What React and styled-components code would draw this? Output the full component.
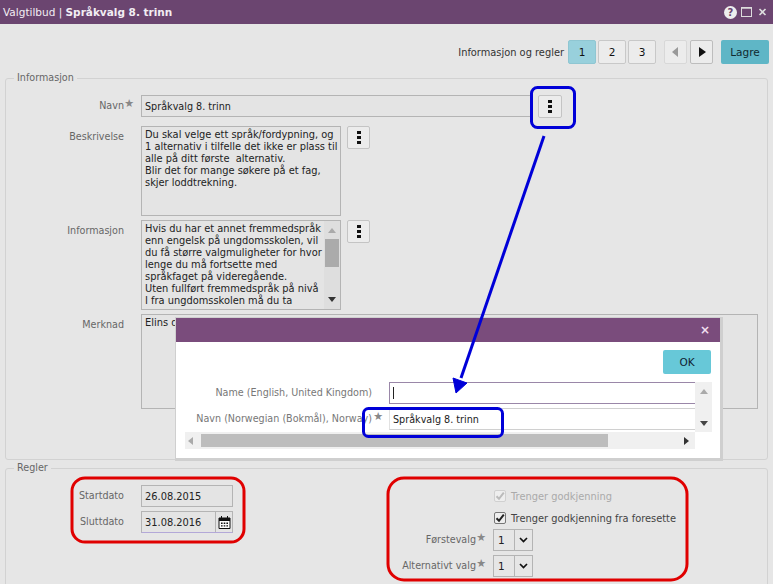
import React from "react";
import styled, { createGlobalStyle } from "styled-components";

const Global = createGlobalStyle`
  html, body { margin: 0; padding: 0; background: #e6e6e6; }
  * { box-sizing: border-box; }
`;
const font = `"DejaVu Sans", Verdana, sans-serif`;

const Page = styled.div`
  position: relative; width: 773px; height: 584px; overflow: hidden;
  background: #e6e6e6; font-family: ${font}; font-size: 9.85px; color: #222;
`;
const TitleBar = styled.header`
  height: 24px; background: #6b4570; color: #f2edf3; display: flex; align-items: center;
  justify-content: space-between; padding: 0 4px 0 3px; font-size: 10.5px;
`;
const TitleStrong = styled.b`font-weight: 700;`;
const WinIcons = styled.div`display: flex; align-items: center; gap: 4px;`;
const Toolbar = styled.div`
  height: 48px; padding: 8px 4px 0 0; display: flex; align-items: center; justify-content: flex-end; color: #333;
`;
const StepLabel = styled.span`margin-right: 4px;`;
const Step = styled.button`
  width: 28px; height: 24px; margin-right: 2px; font: 400 10.5px ${font}; color: #111; padding: 0;
  border: 1px solid ${p => (p.$on ? "#8fc6d2" : "#c8c8c8")}; border-radius: 2px;
  background: ${p => (p.$on ? "#98d0dc" : "#ececec")};
`;
const Nav = styled.button`
  width: 23px; height: 24px; padding: 0; display: flex; align-items: center; justify-content: center;
  border: 1px solid ${p => (p.$off ? "#d8d8d8" : "#bdbdbd")}; border-radius: 2px; background: #ececec;
  margin-left: ${p => p.$gap || 0}px;
`;
const Save = styled.button`
  width: 48px; height: 24px; margin-left: 8px; border: 0; border-radius: 2px; background: #5fb6c6;
  font: 10.5px ${font}; color: #102b30; padding: 0;
`;
const Group = styled.fieldset`
  margin: 0 5px 2px; padding: 0; border: 1px solid #d2d2d2; border-radius: 3px; height: ${p => p.$h}px; min-width: 0;
`;
const Legend = styled.legend`margin-left: 8px; padding: 0 3px; color: #666; font-size: 9.6px; line-height: 12px;`;
const Form = styled.div`padding: 11px 0 0 0; display: flex; flex-direction: column; gap: 4px;`;
const Row = styled.div`display: flex; align-items: flex-start; gap: 6px; margin-bottom: ${p => p.$mb || 0}px;`;
const Label = styled.label`
  width: 129px; padding-right: 11px; text-align: right; color: #666; font-size: 9.6px; line-height: 22px; position: relative; flex: none;
`;
const Star = styled.span`position: absolute; right: ${p => p.$r}px; top: -2px; color: #888; font-size: 11px;`;
const Field = styled.div`
  width: ${p => p.$w}px; height: 22px; border: 1px solid #b4b4b4; background: #e4e4e4; padding: 0 3px;
  line-height: 21px; color: #222; flex: none; display: flex; align-items: center; font-size: ${p => p.$fs || 9.65}px;
`;
const Area = styled.div`
  position: relative; width: ${p => p.$w}px; height: ${p => p.$h}px; border: 1px solid #b4b4b4; background: #e4e4e4;
  padding: 2px 3px; line-height: 12px; color: #222; overflow: hidden; white-space: pre; flex: none;
`;
const Dots = styled.button`
  width: ${p => p.$w || 23}px; height: 23px; border: 1px solid #c4c4c4; border-radius: 2px; background: #ececec; padding: 0;
  display: flex; flex-direction: column; align-items: center; justify-content: center; gap: 2px; flex: none;
`;
const Dot = styled.i`display: block; width: 4px; height: 3px; background: #111;`;
const ScrollTrack = styled.div`
  position: absolute; right: 0; top: 0; bottom: 0; width: 16px; background: #dedede;
  display: flex; flex-direction: column; align-items: center; justify-content: space-between; padding: 6px 0;
`;
const Thumb = styled.div`position: absolute; left: 1px; top: 18px; width: 14px; height: 28px; background: #ababab;`;
const Split = styled.div`display: flex; padding-top: 11px;`;
const LeftCol = styled.div`display: flex; flex-direction: column; gap: 4px;`;
const RightCol = styled.div`display: flex; flex-direction: column; margin-left: 150px;`;
const CheckRow = styled.div`
  height: 22px; margin-left: 110px; display: flex; align-items: center; gap: 5px; color: ${p => (p.$off ? "#aaa" : "#444")};
`;
const Check = styled.span`
  width: 12px; height: 12px; border: 1px solid ${p => (p.$off ? "#d0d0d0" : "#777")}; border-radius: 2px; background: #eee;
  display: flex; align-items: center; justify-content: center; margin-left: 1px;
`;
const SelectRow = styled.div`display: flex; height: 22px; margin-bottom: 4px;`;
const SelectLabel = styled.label`
  width: 110px; padding-right: 17px; text-align: right; color: #666; font-size: 9.6px; line-height: 22px; position: relative;
`;
const Select = styled.div`
  width: 40px; height: 22px; border: 1px solid #b4b4b4; display: flex; align-items: center;
`;
const SelVal = styled.span`width: 21px; padding-left: 4px; border-right: 1px solid #b4b4b4; line-height: 20px; font-size: 10.5px;`;
const SelBtn = styled.span`flex: 1; display: flex; align-items: center; justify-content: center;`;
const DateWrap = styled.div`
  width: 92px; height: 22px; border: 1px solid #b4b4b4; border-bottom-color: #b3a8d8; background: #e4e4e4; display: flex; align-items: center; flex: none;
`;
const DateVal = styled.span`flex: 1; padding-left: 3px;`;
const DateBtn = styled.span`
  width: 17px; height: 100%; border-left: 1px solid #b4b4b4; display: flex; align-items: center; justify-content: center;
`;

const Dialog = styled.section`
  position: absolute; left: 176px; top: 318px; width: 544px; height: 140px; background: #fff;
  box-shadow: 1px 1px 0 2px #cfcfcf;
`;
const DialogBar = styled.div`
  height: 24px; background: #7a4c7c; color: #f0dff0; display: flex; align-items: center; justify-content: flex-end; padding-right: 10px; font-size: 12px; font-weight: 700;
`;
const DialogBody = styled.div`padding: 8px 9px 0;`;
const OkRow = styled.div`display: flex; justify-content: flex-end; margin-bottom: 8px;`;
const Ok = styled.button`
  width: 48px; height: 24px; border: 0; border-radius: 2px; background: #67c8d8; color: #123; font: 10.5px ${font}; padding: 0;
`;
const Scroller = styled.div`display: grid; grid-template-columns: 510px 17px; grid-template-rows: 50px 17px;`;
const Rows = styled.div`display: flex; flex-direction: column; gap: 4px;`;
const DRow = styled.div`display: flex; height: 22px;`;
const DLabel = styled.label`
  width: 204px; padding-right: 17px; text-align: right; color: #777; font-size: 9.6px; line-height: 22px; white-space: nowrap; position: relative; flex: none;
`;
const DInput = styled.div`
  flex: 1; height: 22px; border: 1px solid ${p => p.$focus ? "#9a87a8" : "#d0d0d0"}; border-right: 0; border-left-color: ${p => p.$focus ? "#9a87a8" : "#e2e2e2"};
  background: #fff; padding: 0 3px; line-height: 21px; color: #222; display: flex; align-items: center; font-size: 9.65px;
`;
const Caret = styled.i`display: block; width: 1px; height: 12px; background: #222;`;
const VBar = styled.div`
  background: #f0f0f0; display: flex; flex-direction: column; justify-content: space-between; align-items: center; padding: 6px 0 5px; height: 50px;
`;
const HBar = styled.div`
  background: #f0f0f0; height: 17px; display: flex; align-items: center; justify-content: space-between; padding: 0 6px 0 3px;
`;
const HThumb = styled.div`height: 13px; width: 407px; background: #bdbdbd; margin-left: 8px; margin-right: auto;`;
const Annotations = styled.svg`position: absolute; left: 0; top: 0; pointer-events: none;`;

const Kebab = ({ w }) => <Dots $w={w}><Dot /><Dot /><Dot /></Dots>;
const Tri = ({ d, fill = "#111", w = 8, h = 10, v = "0 0 8 10" }) => (
  <svg width={w} height={h} viewBox={v}><path d={d} fill={fill} /></svg>
);
const Chev = () => (
  <svg width="9" height="6" viewBox="0 0 9 6"><path d="M1 1l3.5 3.5L8 1" fill="none" stroke="#111" strokeWidth="1.7" /></svg>
);
const Tick = ({ c }) => (
  <svg width="10" height="10" viewBox="0 0 10 10"><path d="M1.5 5.2l2.5 2.6L8.8 1.6" fill="none" stroke={c} strokeWidth="2" /></svg>
);

const besk = `Du skal velge ett språk/fordypning, og
1 alternativ i tilfelle det ikke er plass til
alle på ditt første  alternativ.
Blir det for mange søkere på et fag,
skjer loddtrekning.`;
const info = `Hvis du har et annet fremmedspråk
enn engelsk på ungdomsskolen, vil
du få større valgmuligheter for hvor
lenge du må fortsette med
språkfaget på videregående.
Uten fullført fremmedspråk på nivå
I fra ungdomsskolen må du ta`;

export default function App() {
  return (
    <Page>
      <Global />
      <TitleBar>
        <span>Valgtilbud | <TitleStrong>Språkvalg 8. trinn</TitleStrong></span>
        <WinIcons>
          <svg width="13" height="13" viewBox="0 0 13 13"><circle cx="6.5" cy="6.5" r="6.5" fill="#eee" /><text x="6.5" y="10" textAnchor="middle" fontSize="10" fontWeight="700" fontFamily="DejaVu Sans" fill="#6b4570">?</text></svg>
          <svg width="11" height="10" viewBox="0 0 11 10"><rect x=".5" y=".5" width="10" height="9" fill="none" stroke="#ddd" /><path d="M0 1h11" stroke="#ddd" strokeWidth="1.5" /></svg>
          <svg width="13" height="10" viewBox="0 0 13 10"><path d="M3.5 2l6 6M9.5 2l-6 6" stroke="#ddd" strokeWidth="1.6" /></svg>
        </WinIcons>
      </TitleBar>
      <Toolbar>
        <StepLabel>Informasjon og regler</StepLabel>
        <Step $on>1</Step><Step>2</Step><Step>3</Step>
        <Nav $off $gap={6}><Tri d="M6 0v10L0 5z" fill="#999" /></Nav>
        <Nav $gap={3}><Tri d="M1 0v10l7-5z" /></Nav>
        <Save>Lagre</Save>
      </Toolbar>
      <Group $h={388}>
        <Legend>Informasjon</Legend>
        <Form>
          <Row $mb={4}><Label>Navn<Star $r={1}>★</Star></Label><Field $w={391}>Språkvalg 8. trinn</Field><Kebab w={24} /></Row>
          <Row><Label>Beskrivelse</Label><Area $w={200} $h={90}>{besk}</Area><Kebab /></Row>
          <Row>
            <Label>Informasjon</Label>
            <Area $w={200} $h={90}>
              {info}
              <ScrollTrack>
                <Tri d="M4 1l4 5H0z" fill="#aaa" h={6} v="0 0 8 6" />
                <Thumb />
                <Tri d="M0 0h8L4 5z" fill="#333" h={6} v="0 0 8 6" />
              </ScrollTrack>
            </Area>
            <Kebab />
          </Row>
          <Row><Label>Merknad</Label><Area $w={617} $h={95}>Elins d</Area></Row>
        </Form>
      </Group>
      <Group $h={140}>
        <Legend>Regler</Legend>
        <Split>
          <LeftCol>
            <Row><Label>Startdato</Label><Field $w={92} $fs={9.85}>26.08.2015</Field></Row>
            <Row>
              <Label>Sluttdato</Label>
              <DateWrap>
                <DateVal>31.08.2016</DateVal>
                <DateBtn>
                  <svg width="13" height="13" viewBox="0 0 13 13"><path d="M1 2h11v10.5H1z" fill="#fff" stroke="#111" /><path d="M1 2h11v3H1z" fill="#111" /><path d="M3.5 0v3M9.5 0v3" stroke="#111" /><path d="M3 6.5h1.6v1.4H3zM5.7 6.5h1.6v1.4H5.700zM8.400 6.500h1.600v1.400H8.400zM3 9.200h1.600v1.400H3zM5.700 9.200h1.600v1.400H5.700zM8.400 9.200h1.600v1.400H8.400z" fill="#111" /></svg>
                </DateBtn>
              </DateWrap>
            </Row>
          </LeftCol>
          <RightCol>
            <CheckRow $off><Check $off><Tick c="#bbb" /></Check>Trenger godkjenning</CheckRow>
            <CheckRow><Check><Tick c="#222" /></Check>Trenger godkjenning fra foresette</CheckRow>
            <SelectRow>
              <SelectLabel>Førstevalg<Star $r={7}>★</Star></SelectLabel>
              <Select><SelVal>1</SelVal><SelBtn><Chev /></SelBtn></Select>
            </SelectRow>
            <SelectRow>
              <SelectLabel>Alternativt valg<Star $r={7}>★</Star></SelectLabel>
              <Select><SelVal>1</SelVal><SelBtn><Chev /></SelBtn></Select>
            </SelectRow>
          </RightCol>
        </Split>
      </Group>

      <Dialog>
        <DialogBar>×</DialogBar>
        <DialogBody>
          <OkRow><Ok>OK</Ok></OkRow>
          <Scroller>
            <Rows>
              <DRow><DLabel>Name (English, United Kingdom)</DLabel><DInput $focus><Caret /></DInput></DRow>
              <DRow><DLabel>Navn (Norwegian (Bokmål), Norway)<Star $r={6}>★</Star></DLabel><DInput>Språkvalg 8. trinn</DInput></DRow>
            </Rows>
            <VBar>
              <Tri d="M4 1l4 5H0z" fill="#aaa" h={6} v="0 0 8 6" />
              <Tri d="M0 0h8L4 5z" fill="#444" h={6} v="0 0 8 6" />
            </VBar>
            <HBar>
              <Tri d="M5 0v8L0 4z" fill="#aaa" w={5} h={8} v="0 0 5 8" />
              <HThumb />
              <Tri d="M0 0v8l5-4z" fill="#333" w={5} h={8} v="0 0 5 8" />
            </HBar>
          </Scroller>
        </DialogBody>
      </Dialog>

      <Annotations width="773" height="584" viewBox="0 0 773 584">
        <rect x="531.5" y="87.5" width="43" height="40" rx="6" fill="none" stroke="#0000d8" strokeWidth="3" />
        <path d="M544 136L461 378" stroke="#0000d8" strokeWidth="3" fill="none" />
        <path d="M456 393l-3-15 14 5z" fill="#0000d8" stroke="#0000d8" strokeWidth="1" />
        <rect x="363.5" y="408.5" width="139" height="28" rx="5" fill="none" stroke="#0000d8" strokeWidth="3" />
        <rect x="72" y="478" width="172" height="64" rx="13" fill="none" stroke="#e00000" strokeWidth="3" />
        <rect x="388" y="478" width="299" height="102" rx="16" fill="none" stroke="#e00000" strokeWidth="3" />
      </Annotations>
    </Page>
  );
}
